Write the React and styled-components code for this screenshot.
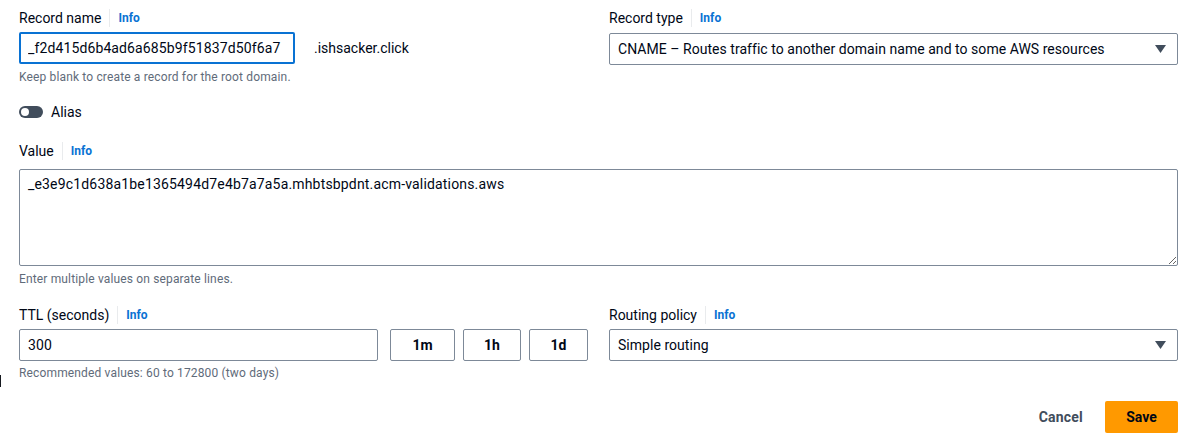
import styled, { createGlobalStyle } from "styled-components";

const GlobalStyle = createGlobalStyle`
  body {
    margin: 0;
    background: #ffffff;
    font-family: Roboto, "Noto Sans", Arial, sans-serif;
    font-size: 14px;
    color: #000716;
  }
  * { box-sizing: border-box; }
`;

const Page = styled.div`
  position: relative;
  width: 1192px;
  height: 442px;
  padding: 8px 14px 0 19px;
`;

const Grid = styled.div`
  display: grid;
  grid-template-columns: 1fr 1fr;
  column-gap: 21px;
`;

const Field = styled.div`
  display: flex;
  flex-direction: column;
  margin-top: ${(p) => p.$top || 0}px;
`;

const LabelRow = styled.div`
  display: flex;
  align-items: center;
  height: 20px;
  line-height: 20px;
  margin-bottom: ${(p) => p.$gap || 4}px;
`;

const Label = styled.span`
  color: #000716;
  font-size: 14px;
`;

const Divider = styled.span`
  width: 1px;
  height: 18px;
  background: #e9ebed;
  margin: 0 8px;
`;

const InfoLink = styled.span`
  color: #0972d3;
  font-size: 12px;
  font-weight: 700;
`;

const Hint = styled.div`
  color: #5f6b7a;
  font-size: 12px;
  line-height: 16px;
  letter-spacing: 0.15px;
  margin-top: ${(p) => p.$top || 4}px;
`;

const NameRow = styled.div`
  display: flex;
  align-items: center;
  gap: 19px;
`;

const Input = styled.input`
  width: ${(p) => p.$w || "100%"};
  height: 32px;
  border: ${(p) => (p.$focus ? "2px solid #0972d3" : "1px solid #7d8998")};
  border-radius: 2px;
  padding: 0 ${(p) => (p.$focus ? 7 : 8)}px;
  font-family: inherit;
  font-size: 14px;
  letter-spacing: 0.12px;
  color: #000716;
  outline: none;
  background: #fff;
`;

const Suffix = styled.span`
  font-size: 14px;
  color: #000716;
`;

const Select = styled.div`
  display: flex;
  align-items: center;
  justify-content: space-between;
  height: 32px;
  margin-top: ${(p) => p.$top || 0}px;
  border: 1px solid #7d8998;
  border-radius: 2px;
  padding: 0 11px 0 8px;
  font-size: 14px;
  letter-spacing: 0.04px;
  color: #000716;
`;

const ToggleRow = styled.div`
  display: flex;
  align-items: center;
  gap: 8px;
  height: 20px;
  margin-top: 17px;
`;

const Toggle = styled.span`
  display: inline-flex;
  align-items: center;
  width: 24px;
  height: 12px;
  border-radius: 6px;
  background: #414d5c;
  padding: 0 2px;
  &::after {
    content: "";
    width: 8px;
    height: 8px;
    border-radius: 50%;
    background: #fff;
  }
`;

const TextArea = styled.textarea`
  display: block;
  width: 100%;
  height: 97px;
  border: 1px solid #7d8998;
  border-radius: 2px;
  padding: 4px 8px;
  font-family: inherit;
  font-size: 14px;
  line-height: 20px;
  letter-spacing: 0.17px;
  color: #000716;
  resize: vertical;
  outline: none;
`;

const TtlRow = styled.div`
  display: flex;
  align-items: center;
`;

const UnitButton = styled.button`
  width: ${(p) => p.$w}px;
  height: 32px;
  margin-left: ${(p) => p.$ml}px;
  border: 1px solid #7d8998;
  border-radius: 2px;
  background: #fff;
  font-family: inherit;
  font-size: 14px;
  font-weight: 700;
  color: #000716;
`;

const Footer = styled.div`
  display: flex;
  justify-content: flex-end;
  align-items: center;
  gap: 22px;
  margin-top: 20px;
`;

const CancelButton = styled.button`
  border: none;
  background: none;
  padding: 0;
  font-family: inherit;
  font-size: 14px;
  font-weight: 700;
  letter-spacing: 0.2px;
  color: #414d5c;
`;

const SaveButton = styled.button`
  width: 73px;
  height: 32px;
  border: none;
  border-radius: 2px;
  background: #ff9900;
  font-family: inherit;
  font-size: 14px;
  font-weight: 700;
  color: #000716;
`;

const Caret = styled.span`
  position: absolute;
  left: 0;
  top: 375px;
  width: 1px;
  height: 12px;
  background: #16191f;
`;

const Arrow = () => (
  <svg width="11" height="8" viewBox="0 0 11 8">
    <path d="M0 0 H11 L5.5 8 Z" fill="#414d5c" />
  </svg>
);

const FieldLabel = ({ text, gap }) => (
  <LabelRow $gap={gap}>
    <Label>{text}</Label>
    <Divider />
    <InfoLink>Info</InfoLink>
  </LabelRow>
);

export default function App() {
  return (
    <Page>
      <GlobalStyle />
      <Grid>
        <Field>
          <FieldLabel text="Record name" gap={4} />
          <NameRow>
            <Input $w="276px" $focus defaultValue="_f2d415d6b4ad6a685b9f51837d50f6a7" />
            <Suffix>.ishsacker.click</Suffix>
          </NameRow>
          <Hint $top={5}>Keep blank to create a record for the root domain.</Hint>
        </Field>
        <Field>
          <FieldLabel text="Record type" gap={4} />
          <Select $top={1}>
            <span>CNAME – Routes traffic to another domain name and to some AWS resources</span>
            <Arrow />
          </Select>
        </Field>
      </Grid>

      <ToggleRow>
        <Toggle />
        <Label>Alias</Label>
      </ToggleRow>

      <Field $top={19}>
        <FieldLabel text="Value" gap={8} />
        <TextArea defaultValue="_e3e9c1d638a1be1365494d7e4b7a7a5a.mhbtsbpdnt.acm-validations.aws" />
        <Hint $top={5}>Enter multiple values on separate lines.</Hint>
      </Field>

      <Grid>
        <Field $top={18}>
          <FieldLabel text="TTL (seconds)" gap={4} />
          <TtlRow>
            <Input $w="359px" defaultValue="300" />
            <UnitButton $w={65} $ml={12}>1m</UnitButton>
            <UnitButton $w={58} $ml={8}>1h</UnitButton>
            <UnitButton $w={59} $ml={8}>1d</UnitButton>
          </TtlRow>
          <Hint $top={4}>Recommended values: 60 to 172800 (two days)</Hint>
        </Field>
        <Field $top={18}>
          <FieldLabel text="Routing policy" gap={4} />
          <Select>
            <span>Simple routing</span>
            <Arrow />
          </Select>
        </Field>
      </Grid>

      <Footer>
        <CancelButton>Cancel</CancelButton>
        <SaveButton>Save</SaveButton>
      </Footer>
      <Caret />
    </Page>
  );
}
